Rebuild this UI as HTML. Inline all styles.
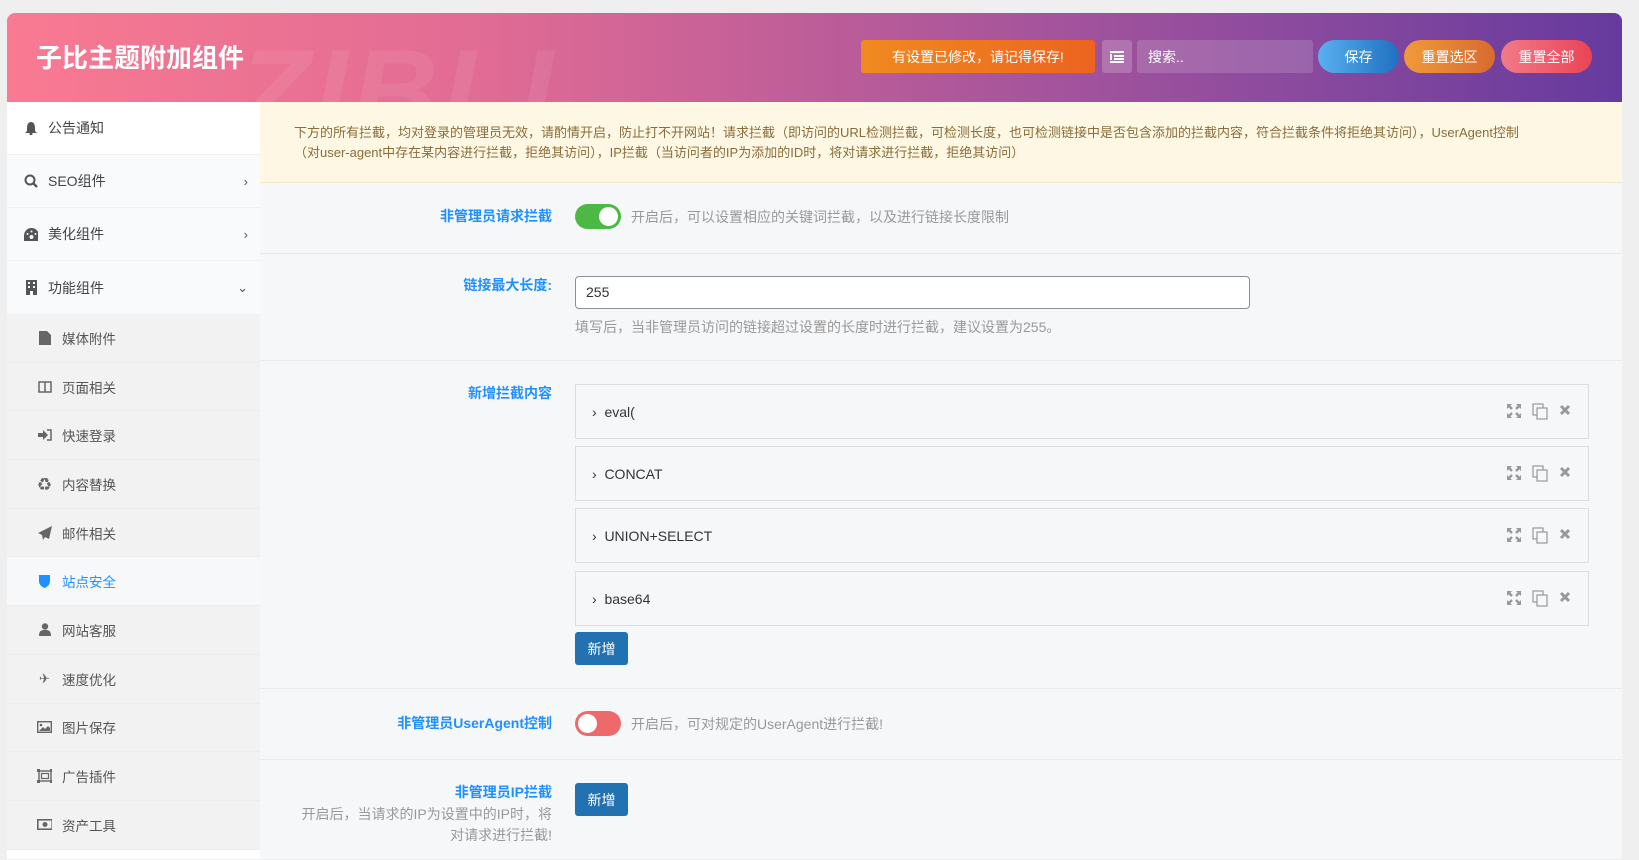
<!DOCTYPE html>
<html><head><meta charset="utf-8"><style>
*{box-sizing:border-box;margin:0;padding:0}
body{width:1639px;height:859px;background:#efefef;font-family:"Liberation Sans","Noto Sans CJK SC",sans-serif;overflow:hidden;position:relative;font-size:14px}
.hdr{position:absolute;left:7px;top:13px;width:1615px;height:89px;border-radius:8px 8px 0 0;background:linear-gradient(90deg,#f97a92 0%,#e06b94 30%,#b55a9a 55%,#8a4a9e 80%,#663a9e 100%);overflow:hidden}
.wm{position:absolute;left:230px;top:10px;font:italic bold 120px "Liberation Sans",sans-serif;color:rgba(255,255,255,.07);letter-spacing:4px}
.title{position:absolute;left:29px;top:25px;color:#fff;font-size:26px;font-weight:bold}
.hb{position:absolute;top:27px;height:33px;color:#fff;font-size:14px;display:flex;align-items:center;justify-content:center}
.side{position:absolute;left:7px;top:102px;width:253px;height:757px;background:#fff}
.mi{height:53px;border-bottom:1px solid #eef0f2;display:flex;align-items:center;padding-left:17px;color:#444;font-size:14px;background:#f9fafb;position:relative}
.mi .ic{width:14px;margin-right:10px;color:#555;font-size:13px;text-align:center;display:flex;justify-content:center}
.mi .ar{position:absolute;right:12px;color:#555;font-size:13px}
.si{height:48.7px;display:flex;align-items:center;padding-left:30px;color:#555;font-size:13.5px;background:#f2f2f2;border-bottom:1px solid #ececec}
.si .ic{width:15px;margin-right:10px;text-align:center;color:#666;font-size:13px;display:flex;justify-content:center}
.si.act{background:#f7f8fa;color:#1e90ff}
.si.act .ic{color:#1e90ff}
.main{position:absolute;left:260px;top:102px;width:1362px;height:757px;background:#f6f7f9}
.notice{height:81px;background:#fdf7e3;border-bottom:1px solid #f5e9c4;color:#8a6d3b;font-size:13px;line-height:20px;padding:21px 95px 0 34px}
.row{position:absolute;left:0;width:1362px;border-bottom:1px solid #e8eaed}
.lbl{position:absolute;right:1070px;color:#1e90ff;font-weight:bold;font-size:14px;text-align:right;white-space:nowrap}
.desc{color:#999;font-size:14px}
.tg{position:absolute;width:46px;height:25px;border-radius:13px}
.tg i{position:absolute;top:3px;width:19px;height:19px;border-radius:50%;background:#fff}
.btn{position:absolute;width:53px;height:33px;background:#2271b1;color:#fff;border-radius:3px;display:flex;align-items:center;justify-content:center;font-size:14px}
.it{position:absolute;left:315px;width:1014px;height:55px;border:1px solid #dcdee2;background:#f6f7f9;display:flex;align-items:center;padding-left:16px;color:#333;font-size:14px}
</style></head><body>
<div class="hdr"><div class="wm">ZIBLL</div><div class="title">子比主题附加组件</div>
<div class="hb" style="left:854px;width:234px;background:linear-gradient(90deg,#f08a20,#ec6420);border-radius:3px">有设置已修改，请记得保存!</div>
<div class="hb" style="left:1095px;width:30px;background:rgba(255,255,255,.2);border-radius:3px"><svg width="14" height="12"><rect x="0" y="0" width="14" height="2" fill="#fff"/><rect x="4" y="4" width="10" height="2" fill="#fff"/><rect x="4" y="7" width="10" height="2" fill="#fff"/><rect x="0" y="10" width="14" height="2" fill="#fff"/><rect x="0" y="3" width="2" height="6" fill="#fff"/></svg></div>
<div class="hb" style="left:1130px;width:176px;background:rgba(255,255,255,.15);border-radius:3px;justify-content:flex-start;padding-left:11px">搜索..</div>
<div class="hb" style="left:1311px;width:81px;background:linear-gradient(90deg,#5ab0f0,#2070c0);border-radius:17px">保存</div>
<div class="hb" style="left:1397px;width:91px;background:linear-gradient(90deg,#f09a3a,#d86a30);border-radius:17px">重置选区</div>
<div class="hb" style="left:1494px;width:91px;background:linear-gradient(90deg,#f27a88,#ea4455);border-radius:17px">重置全部</div>
</div>
<div class="side">
<div class="mi" style="background:#fff"><span class="ic"><svg width="12" height="14"><path d="M6 1C3 1 2 4 2 7v3L0 12h12l-2-2V7c0-3-1-6-4-6z" fill="#555"/><circle cx="6" cy="13" r="1.5" fill="#555"/></svg></span>公告通知</div>
<div class="mi"><span class="ic"><svg width="14" height="14"><circle cx="6" cy="6" r="4.5" fill="none" stroke="#555" stroke-width="2"/><path d="M9 9l4 4" stroke="#555" stroke-width="2.4"/></svg></span>SEO组件<span class="ar">›</span></div>
<div class="mi"><span class="ic"><svg width="15" height="13"><path d="M7.5 0A7.5 7.5 0 0 0 0 7.5V13h15V7.5A7.5 7.5 0 0 0 7.5 0z" fill="#555"/><circle cx="7.5" cy="9" r="2" fill="#f9fafb"/><circle cx="3.5" cy="6" r="1" fill="#f9fafb"/><circle cx="7.5" cy="3.5" r="1" fill="#f9fafb"/><circle cx="11.5" cy="6" r="1" fill="#f9fafb"/></svg></span>美化组件<span class="ar">›</span></div>
<div class="mi" style="border-bottom:none"><span class="ic"><svg width="11" height="15"><rect width="11" height="15" fill="#555"/><rect x="2" y="2" width="2" height="2" fill="#f9fafb"/><rect x="7" y="2" width="2" height="2" fill="#f9fafb"/><rect x="2" y="6" width="2" height="2" fill="#f9fafb"/><rect x="7" y="6" width="2" height="2" fill="#f9fafb"/><rect x="4" y="11" width="3" height="4" fill="#f9fafb"/></svg></span>功能组件<span class="ar">⌄</span></div>
<div class="si"><span class="ic"><svg width="12" height="14"><path d="M0 0h8l4 4v10H0z" fill="#666"/></svg></span>媒体附件</div>
<div class="si"><span class="ic"><svg width="14" height="12"><rect x="1" y="1" width="12" height="10" fill="none" stroke="#666" stroke-width="1.5"/><path d="M7 1v10" stroke="#666" stroke-width="1.5"/></svg></span>页面相关</div>
<div class="si"><span class="ic"><svg width="14" height="12"><path d="M0 4h5V1l5 5-5 5V8H0z" fill="#666"/><path d="M9 1h4v10H9" fill="none" stroke="#666" stroke-width="1.5"/></svg></span>快速登录</div>
<div class="si"><span class="ic">♻</span>内容替换</div>
<div class="si"><span class="ic"><svg width="14" height="14"><path d="M14 0L0 7l4 2 1 5 2-3 4 2z" fill="#666"/></svg></span>邮件相关</div>
<div class="si act"><span class="ic"><svg width="11" height="14"><path d="M0 1h11v6c0 4-3 6-5.5 7C3 13 0 11 0 7z" fill="#1e90ff"/></svg></span>站点安全</div>
<div class="si"><span class="ic"><svg width="12" height="13"><circle cx="6" cy="3.5" r="3.2" fill="#666"/><path d="M0 13c0-5 2-6 6-6s6 1 6 6z" fill="#666"/></svg></span>网站客服</div>
<div class="si"><span class="ic">✈</span>速度优化</div>
<div class="si"><span class="ic"><svg width="15" height="12"><rect x=".7" y=".7" width="13.6" height="10.6" fill="none" stroke="#666" stroke-width="1.4"/><path d="M2 10l4-4 2 2 3-3 2 2v3z" fill="#666"/><circle cx="4" cy="4" r="1.3" fill="#666"/></svg></span>图片保存</div>
<div class="si"><span class="ic"><svg width="16" height="14"><rect x="2" y="2" width="12" height="10" fill="none" stroke="#666" stroke-width="1.4"/><rect x="4.5" y="4.5" width="7" height="5" fill="none" stroke="#666" stroke-width="1.2"/><rect x="0" y="0" width="3" height="3" fill="#666"/><rect x="13" y="0" width="3" height="3" fill="#666"/><rect x="0" y="11" width="3" height="3" fill="#666"/><rect x="13" y="11" width="3" height="3" fill="#666"/></svg></span>广告插件</div>
<div class="si"><span class="ic"><svg width="16" height="11"><rect x=".8" y=".8" width="14.4" height="9.4" fill="none" stroke="#666" stroke-width="1.6"/><circle cx="8" cy="5.5" r="2.5" fill="#666"/></svg></span>资产工具</div>
</div>
<div class="main">
<div class="notice">下方的所有拦截，均对登录的管理员无效，请酌情开启，防止打不开网站！请求拦截（即访问的URL检测拦截，可检测长度，也可检测链接中是否包含添加的拦截内容，符合拦截条件将拒绝其访问），UserAgent控制（对user-agent中存在某内容进行拦截，拒绝其访问），IP拦截（当访问者的IP为添加的ID时，将对请求进行拦截，拒绝其访问）</div>
<div class="row" style="top:81px;height:71px">
<div class="lbl" style="top:23px">非管理员请求拦截</div>
<div class="tg" style="left:315px;top:21px;background:#4cb944"><i style="left:24px"></i></div>
<div class="desc" style="position:absolute;left:371px;top:24px">开启后，可以设置相应的关键词拦截，以及进行链接长度限制</div>
</div>
<div class="row" style="top:152px;height:107px">
<div class="lbl" style="top:21px">链接最大长度:</div>
<div style="position:absolute;left:315px;top:22px;width:675px;height:33px;background:#fff;border:1px solid #8c8f94;border-radius:4px;padding:7px 10px;font-size:14px;color:#333">255</div>
<div class="desc" style="position:absolute;left:315px;top:63px">填写后，当非管理员访问的链接超过设置的长度时进行拦截，建议设置为255。</div>
</div>
<div class="row" style="top:259px;height:328px">
<div class="lbl" style="top:22px">新增拦截内容</div>
</div>
<div class="it" style="top:282px">› &nbsp;eval(</div>
<div class="it" style="top:344px">› &nbsp;CONCAT</div>
<div class="it" style="top:406px">› &nbsp;UNION+SELECT</div>
<div class="it" style="top:469px">› &nbsp;base64</div>
<div class="btn" style="left:315px;top:530px">新增</div>
<div class="row" style="top:587px;height:71px">
<div class="lbl" style="top:24px">非管理员UserAgent控制</div>
<div class="tg" style="left:315px;top:22px;background:#ee6a6a"><i style="left:3px"></i></div>
<div class="desc" style="position:absolute;left:371px;top:25px">开启后，可对规定的UserAgent进行拦截!</div>
</div>
<div class="row" style="top:658px;height:100px;border:none">
<div class="lbl" style="top:22px">非管理员IP拦截</div>
<div class="desc" style="position:absolute;right:1070px;top:44px;text-align:right;line-height:21px">开启后，当请求的IP为设置中的IP时，将<br>对请求进行拦截!</div>
<div class="btn" style="left:315px;top:23px">新增</div>
</div>
</div>
<svg style="position:absolute;left:0;top:0" width="1639" height="859">
<defs><g id="ic" fill="#999" stroke="#999"><path d="M1508 405l4 4M1520 405l-4 4M1508 417l4-4M1520 417l-4-4" stroke-width="2.4"/><path d="M1507 404h5l-5 5zM1521 404h-5l5 5zM1507 418h5l-5-5zM1521 418h-5l5-5z" stroke="none"/>
<rect x="1533" y="404" width="10" height="11" fill="none" stroke-width="1.2"/><rect x="1537" y="408" width="10" height="11" fill="#f6f7f9" stroke-width="1.2"/>
<path d="M1561 406l8 8M1569 406l-8 8" stroke-width="3"/></g></defs>
<use href="#ic"/><use href="#ic" y="62"/><use href="#ic" y="124"/><use href="#ic" y="187"/>
</svg>
</body></html>
